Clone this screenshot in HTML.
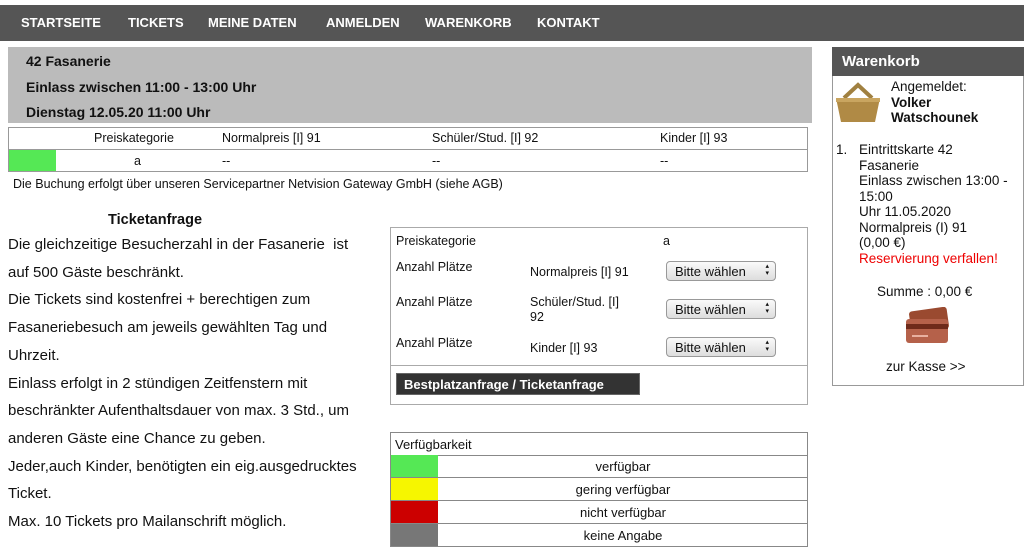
<!DOCTYPE html>
<html><head><meta charset="utf-8"><style>
*{margin:0;padding:0;box-sizing:border-box}
body{width:1024px;height:550px;background:#fff;font-family:"Liberation Sans",sans-serif;color:#111;position:relative;overflow:hidden}
.a{position:absolute;white-space:nowrap}
.nav{position:absolute;left:0;top:5px;width:1024px;height:36px;background:#555}
.nav span{position:absolute;top:10px;color:#fff;font-weight:bold;font-size:13px}
.hd{position:absolute;left:8px;top:47px;width:804px;height:76px;background:#bbb}
.hd div{position:absolute;left:18px;font-weight:bold;font-size:14px}
.t{font-size:12.5px}
.sel{position:absolute;left:666px;width:110px;height:20px;border:1px solid #999;border-radius:4px;background:linear-gradient(#fafafa,#ddd);font-size:13px;padding:2px 0 0 8px}
.sel:after{content:"\25B4\A\25BE";white-space:pre;position:absolute;right:6px;top:1px;font-size:7px;line-height:7px}
.row{position:absolute;left:390px;width:418px;height:23px;border:1px solid #888;border-top:none;font-size:13px;text-align:center;padding:4px 0 0 48px}
.row i{position:absolute;left:0;top:0;width:47px;height:22px}
.wk{font-size:13.5px;line-height:15.5px}
</style></head><body>
<div class="nav">
<span style="left:21px">STARTSEITE</span><span style="left:128px">TICKETS</span><span style="left:208px">MEINE DATEN</span><span style="left:326px">ANMELDEN</span><span style="left:425px">WARENKORB</span><span style="left:537px">KONTAKT</span>
</div>
<div class="hd"><div style="top:6px">42 Fasanerie</div><div style="top:32px">Einlass zwischen 11:00 - 13:00 Uhr</div><div style="top:57px">Dienstag 12.05.20 11:00 Uhr</div></div>
<div class="a" style="left:8px;top:127px;width:800px;height:45px;border:1px solid #999"></div>
<div class="a" style="left:9px;top:149px;width:798px;height:1px;background:#999"></div>
<div class="a" style="left:9px;top:150px;width:47px;height:21px;background:#55e855"></div>
<div class="a t" style="left:94px;top:131px">Preiskategorie</div>
<div class="a t" style="left:222px;top:131px">Normalpreis [I] 91</div>
<div class="a t" style="left:432px;top:131px">Schüler/Stud. [I] 92</div>
<div class="a t" style="left:660px;top:131px">Kinder [I] 93</div>
<div class="a t" style="left:134px;top:154px">a</div>
<div class="a t" style="left:222px;top:154px">--</div>
<div class="a t" style="left:432px;top:154px">--</div>
<div class="a t" style="left:660px;top:154px">--</div>
<div class="a" style="left:13px;top:177px;font-size:12.5px">Die Buchung erfolgt über unseren Servicepartner Netvision Gateway GmbH (siehe AGB)</div>

<div class="a" style="left:108px;top:212px;font-weight:bold;font-size:14.5px">Ticketanfrage</div>
<div class="a" style="left:8px;top:231px;font-size:15px;line-height:27.7px">Die gleichzeitige Besucherzahl in der Fasanerie&nbsp; ist<br>auf 500 Gäste beschränkt.<br>Die Tickets sind kostenfrei + berechtigen zum<br>Fasaneriebesuch am jeweils gewählten Tag und<br>Uhrzeit.<br>Einlass erfolgt in 2 stündigen Zeitfenstern mit<br>beschränkter Aufenthaltsdauer von max. 3 Std., um<br>anderen Gäste eine Chance zu geben.<br>Jeder,auch Kinder, benötigten ein eig.ausgedrucktes<br>Ticket.<br>Max. 10 Tickets pro Mailanschrift möglich.</div>

<div class="a" style="left:390px;top:227px;width:418px;height:178px;border:1px solid #aaa"></div>
<div class="a" style="left:391px;top:365px;width:416px;height:1px;background:#aaa"></div>
<div class="a t" style="left:396px;top:234px">Preiskategorie</div>
<div class="a t" style="left:663px;top:234px">a</div>
<div class="a t" style="left:396px;top:260px">Anzahl Plätze</div>
<div class="a t" style="left:396px;top:295px">Anzahl Plätze</div>
<div class="a t" style="left:396px;top:336px">Anzahl Plätze</div>
<div class="a t" style="left:530px;top:265px">Normalpreis [I] 91</div>
<div class="a t" style="left:530px;top:295px;line-height:15px">Schüler/Stud. [I]<br>92</div>
<div class="a t" style="left:530px;top:341px">Kinder [I] 93</div>
<div class="sel" style="top:261px">Bitte wählen</div>
<div class="sel" style="top:299px">Bitte wählen</div>
<div class="sel" style="top:337px">Bitte wählen</div>
<div class="a" style="left:396px;top:373px;width:244px;height:22px;background:#333;border:1px solid #666;color:#fff;font-weight:bold;font-size:13px;padding:3px 0 0 7px">Bestplatzanfrage / Ticketanfrage</div>

<div class="a" style="left:390px;top:432px;width:418px;height:24px;border:1px solid #888;font-size:13px;padding:4px 0 0 4px">Verfügbarkeit</div>
<div class="row" style="top:455px"><i style="background:#55e855"></i>verfügbar</div>
<div class="row" style="top:478px"><i style="background:#f6f600"></i>gering verfügbar</div>
<div class="row" style="top:501px"><i style="background:#cc0000"></i>nicht verfügbar</div>
<div class="row" style="top:524px"><i style="background:#777"></i>keine Angabe</div>

<div class="a" style="left:832px;top:47px;width:192px;height:339px;border:1px solid #999"></div>
<div class="a" style="left:832px;top:47px;width:192px;height:29px;background:#555;color:#fff;font-weight:bold;font-size:15px;padding:6px 0 0 10px">Warenkorb</div>
<svg class="a" style="left:834px;top:82px" width="48" height="42" viewBox="0 0 48 42">
<path d="M10 16 L24 3 L38 16" fill="none" stroke="#a08040" stroke-width="4"/>
<path d="M2 16 H46 L41 40 H7 Z" fill="#b08a45"/>
<rect x="2" y="16" width="44" height="4" fill="#c9a560"/>
</svg>
<div class="a wk" style="left:891px;top:79px">Angemeldet:<br><b>Volker<br>Watschounek</b></div>
<div class="a wk" style="left:836px;top:142px">1.</div>
<div class="a wk" style="left:859px;top:142px">Eintrittskarte 42<br>Fasanerie<br>Einlass zwischen 13:00 -<br>15:00<br>Uhr 11.05.2020<br>Normalpreis (I) 91<br>(0,00 €)<br><span style="color:#e00">Reservierung verfallen!</span></div>
<div class="a" style="left:877px;top:284px;font-size:13.5px">Summe : 0,00 €</div>
<svg class="a" style="left:904px;top:307px" width="48" height="38" viewBox="0 0 48 38">
<rect x="6" y="2" width="38" height="22" rx="3" fill="#9a4a30" transform="rotate(-8 25 13)"/>
<rect x="2" y="12" width="42" height="24" rx="3" fill="#b5614a"/>
<rect x="2" y="17" width="42" height="5" fill="#6e2a1a"/>
<rect x="8" y="28" width="16" height="2" fill="#e8b0a0"/>
</svg>
<div class="a" style="left:886px;top:359px;font-size:13.5px">zur Kasse &gt;&gt;</div>
</body></html>
